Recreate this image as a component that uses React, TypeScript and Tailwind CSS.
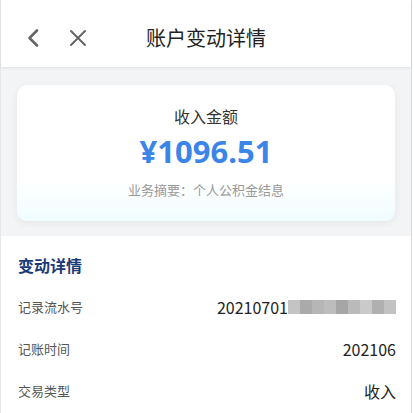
import React from "react";

const font = { fontFamily: '"Noto Sans CJK SC", "Noto Sans", sans-serif' };

function Row({ label, children }: { label: string; children: React.ReactNode }) {
  return (
    <div className="flex h-[42px] items-center justify-between">
      <span className="text-[13px] text-[#555]">{label}</span>
      <div className="flex items-center text-[16px] text-[#222]">{children}</div>
    </div>
  );
}

export default function App() {
  const blocks = ["#c4c4c4", "#aaaaaa", "#b6b6b6", "#bdbdbd", "#a6a6a6", "#bababa", "#cacaca", "#b0b0b0", "#c2c2c2"];
  return (
    <div className="flex h-[413px] w-[414px] overflow-hidden bg-white" style={font}>
      <div className="flex h-full w-[411px] flex-col border-l border-[#e6e6e6]">
        <div className="relative z-10 flex h-[67px] shrink-0 items-center bg-white pt-[9px] shadow-[0_1px_3px_rgba(0,0,0,0.08)]">
          <div className="flex w-[100px] items-center pl-[24px]">
            <svg width="18" height="20" viewBox="0 0 18 20" fill="none" stroke="#666" strokeWidth="2.6" strokeLinecap="round" strokeLinejoin="round">
              <path d="M12 2.5 L4.5 10 L12 17.5" />
            </svg>
            <svg className="ml-[26px]" width="18" height="18" viewBox="0 0 18 18" fill="none" stroke="#666" strokeWidth="2" strokeLinecap="round">
              <path d="M2 2 L16 16 M16 2 L2 16" />
            </svg>
          </div>
          <div className="absolute left-0 right-0 top-[9px] flex h-[58px] items-center justify-center pointer-events-none">
            <span className="text-[20px] text-[#222]">账户变动详情</span>
          </div>
        </div>
        <div className="shrink-0 bg-[#f3f4f6] px-[16px] pb-[15px] pt-[18px]">
          <div className="flex h-[136px] flex-col items-center rounded-[10px] bg-[linear-gradient(180deg,#ffffff_0%,#ffffff_70%,#f0fcff_100%)] pt-[20px] shadow-[0_2px_8px_rgba(0,0,0,0.06)]">
            <div className="text-[16px] leading-[22px] text-[#333]">收入金额</div>
            <div className="mt-[3px] text-[31px] font-bold leading-[42px] text-[#3b84e8]" style={{ fontFamily: '"Noto Sans", "Noto Sans CJK SC", sans-serif' }}>¥1096.51</div>
            <div className="mt-[9px] text-[13px] leading-[18px] text-[#999]">业务摘要：个人公积金结息</div>
          </div>
        </div>
        <div className="flex-1 bg-white px-[17px] pr-[15px]">
          <div className="flex h-[50px] items-center pt-[8px] text-[16px] font-bold text-[#1a3a78]">变动详情</div>
          <Row label="记录流水号">
            <span>20210701</span>
            <div className="flex h-[14px]">
              {blocks.map((c, i) => (
                <div key={i} className="h-full w-[12px]" style={{ backgroundColor: c }} />
              ))}
            </div>
          </Row>
          <Row label="记账时间">
            <span>202106</span>
          </Row>
          <Row label="交易类型">
            <span>收入</span>
          </Row>
        </div>
      </div>
      <div className="h-full w-[1px] bg-[#d9d9d9]" />
      <div className="h-full w-[2px] bg-white" />
    </div>
  );
}
